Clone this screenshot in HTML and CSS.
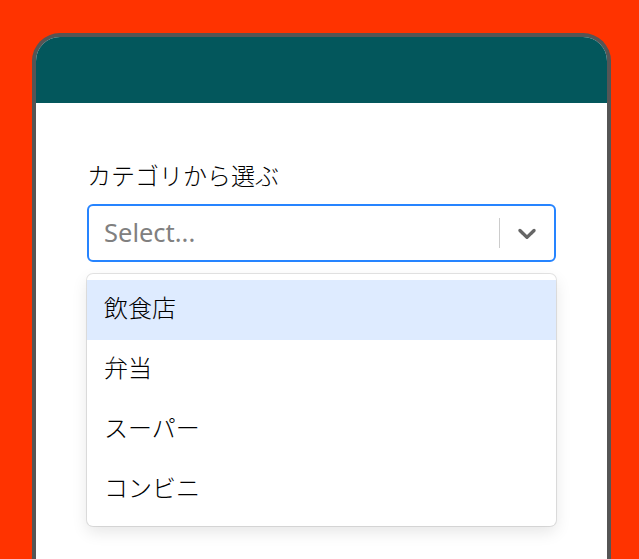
FILE: index.html
```html
<!DOCTYPE html>
<html lang="ja">
<head>
<meta charset="utf-8">
<link rel="stylesheet" href="styles.css">
</head>
<body>
<div class="frame">
  <div class="header"></div>
  <div class="content">
    <label class="label">カテゴリから選ぶ</label>
    <div class="control">
      <div class="value"><span class="placeholder">Select...</span></div>
      <div class="indicators">
        <span class="sep"></span>
        <div class="dropdown-ind">
          <svg width="30" height="30" viewBox="0 0 20 20" aria-hidden="true"><path fill="#666" d="M4.516 7.548c0.436-0.446 1.043-0.481 1.576 0l3.908 3.747 3.908-3.747c0.533-0.481 1.141-0.446 1.574 0 0.436 0.445 0.408 1.197 0 1.615-0.406 0.418-4.695 4.502-4.695 4.502-0.217 0.223-0.502 0.335-0.787 0.335s-0.57-0.112-0.789-0.335c0 0-4.287-4.084-4.695-4.502s-0.436-1.170 0-1.615z"/></svg>
        </div>
      </div>
    </div>
    <div class="menu">
      <div class="option focused">飲食店</div>
      <div class="option">弁当</div>
      <div class="option">スーパー</div>
      <div class="option">コンビニ</div>
    </div>
  </div>
</div>
</body>
</html>
```
FILE: styles.css
```css
* { box-sizing: border-box; }
html, body { margin: 0; height: 100%; }
body {
  background: #ff3300;
  padding: 33px 28px 0 32px;
  overflow: hidden;
  font-family: "Noto Sans", "Noto Sans CJK JP", sans-serif;
}
.frame {
  width: 579px;
  height: 526px;
  border: 4px solid #555555;
  border-bottom: 0;
  border-radius: 28px 28px 0 0;
  background: #ffffff;
  overflow: hidden;
}
.header {
  height: 66px;
  background: #03575c;
}
.content {
  padding: 58px 51px 0 51px;
}
.label {
  display: block;
  font-size: 24px;
  font-weight: 300;
  line-height: 30px;
  color: #000;
  margin-bottom: 13px;
}
.control {
  display: flex;
  align-items: center;
  height: 58px;
  border: 2px solid #2684ff;
  border-radius: 6px;
  background: #fff;
}
.value {
  flex: 1;
  padding: 0 12px 3px;
}
.placeholder {
  margin-left: 3px;
  font-size: 25.5px;
  color: #808080;
}
.indicators {
  display: flex;
  align-self: stretch;
  align-items: center;
}
.sep {
  width: 1px;
  align-self: stretch;
  margin: 12px 0;
  background: #cccccc;
}
.dropdown-ind {
  padding: 12px;
  display: flex;
}
.menu {
  margin-top: 12px;
  padding: 6px 0;
  border-radius: 6px;
  background: #fff;
  box-shadow: 0 0 0 1px rgba(0,0,0,0.1), 0 6px 16px rgba(0,0,0,0.1);
}
.option {
  height: 60px;
  padding: 10px 17px 14px;
  font-size: 24px;
  font-weight: 300;
  line-height: 36px;
  color: #000;
}
.option.focused {
  background: #deebff;
}
```
